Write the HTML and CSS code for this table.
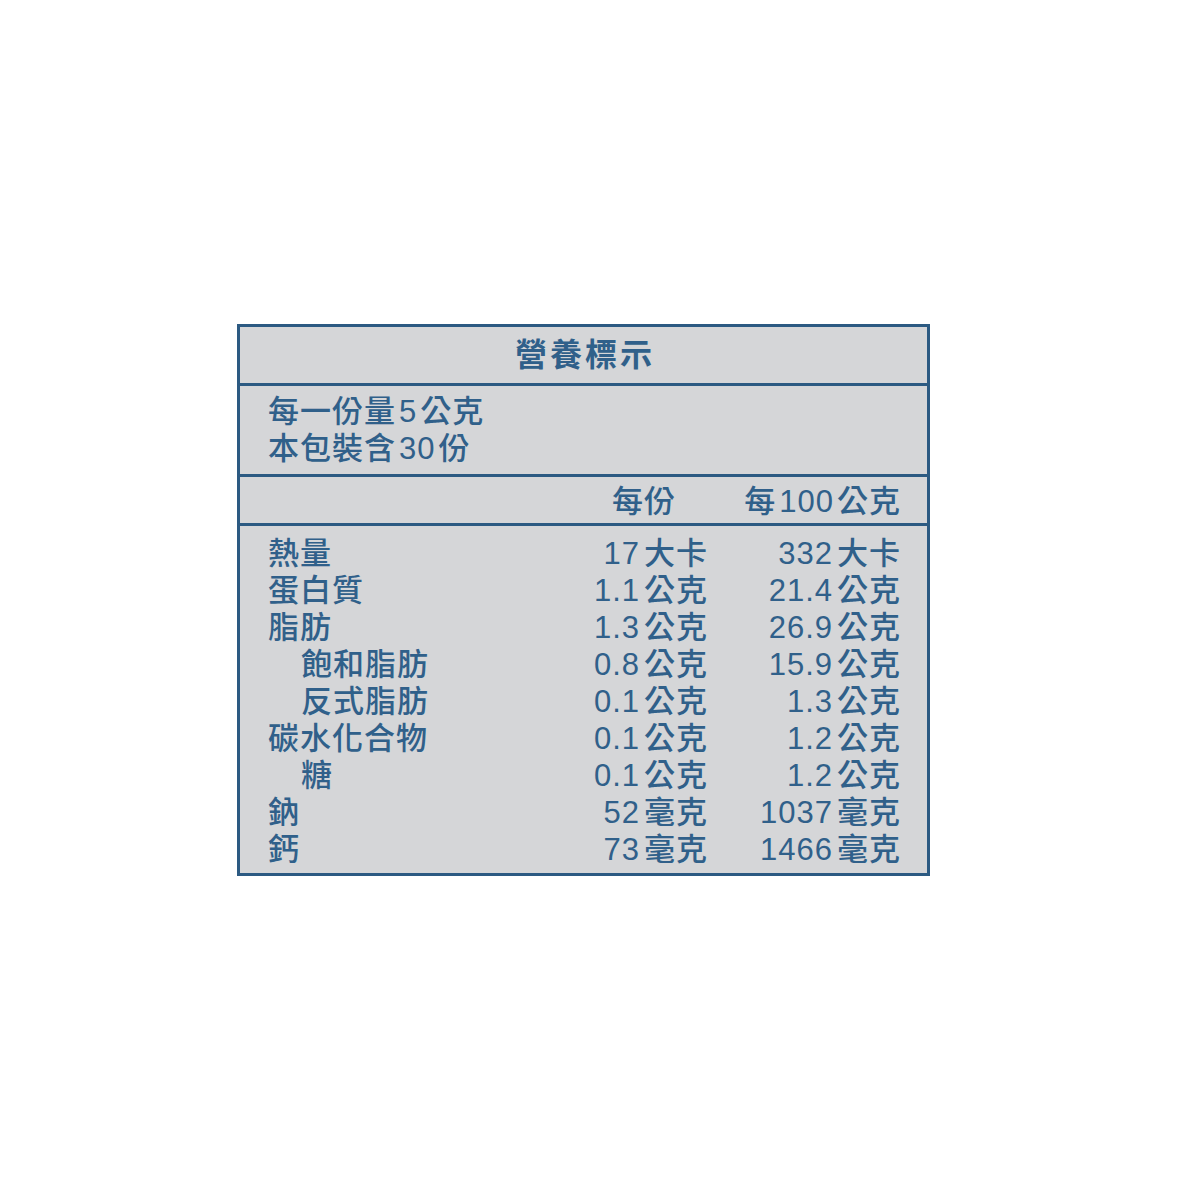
FILE: index.html
```html
<!DOCTYPE html>
<html lang="zh-Hant">
<head>
<meta charset="utf-8">
<title>營養標示</title>
<link rel="stylesheet" href="styles.css">
</head>
<body>
<div class="page">
  <div class="label">
    <div class="title">營養標示</div>
    <div class="serving">
      <div>每一份量<span class="num">5</span>公克</div>
      <div>本包裝含<span class="num">30</span>份</div>
    </div>
    <div class="colhead">
      <div></div>
      <div class="c1h">每份</div>
      <div class="c2h">每<span class="num">100</span>公克</div>
    </div>
    <div class="rows">
      <div class="name">熱量</div><div class="v">17<span class="u">大卡</span></div><div class="v">332<span class="u">大卡</span></div>
      <div class="name">蛋白質</div><div class="v">1.1<span class="u">公克</span></div><div class="v">21.4<span class="u">公克</span></div>
      <div class="name">脂肪</div><div class="v">1.3<span class="u">公克</span></div><div class="v">26.9<span class="u">公克</span></div>
      <div class="name sub">飽和脂肪</div><div class="v">0.8<span class="u">公克</span></div><div class="v">15.9<span class="u">公克</span></div>
      <div class="name sub">反式脂肪</div><div class="v">0.1<span class="u">公克</span></div><div class="v">1.3<span class="u">公克</span></div>
      <div class="name">碳水化合物</div><div class="v">0.1<span class="u">公克</span></div><div class="v">1.2<span class="u">公克</span></div>
      <div class="name sub">糖</div><div class="v">0.1<span class="u">公克</span></div><div class="v">1.2<span class="u">公克</span></div>
      <div class="name">鈉</div><div class="v">52<span class="u">毫克</span></div><div class="v">1037<span class="u">毫克</span></div>
      <div class="name">鈣</div><div class="v">73<span class="u">毫克</span></div><div class="v">1466<span class="u">毫克</span></div>
    </div>
  </div>
</div>
</body>
</html>
```

FILE: styles.css
```css
html, body {
  margin: 0;
  padding: 0;
  background: #ffffff;
}
.page {
  padding: 324px 0 0 237px;
}
.label {
  width: 687px;
  border: 3px solid #2c5a82;
  background: #d5d6d8;
  color: #30608a;
  font-family: "Liberation Sans", "Noto Sans CJK TC", sans-serif;
  font-weight: 500;
  font-size: 31px;
  line-height: 37px;
  letter-spacing: 1px;
}
.title {
  height: 56px;
  display: flex;
  align-items: center;
  justify-content: center;
  padding-left: 3px;
  font-weight: 700;
  font-size: 32px;
  letter-spacing: 3px;
  border-bottom: 3px solid #2c5a82;
}
.serving {
  padding: 7px 28px 7px 28px;
  height: 74px;
  border-bottom: 3px solid #2c5a82;
}
.num {
  margin: 0 3px;
}
.colhead {
  display: grid;
  grid-template-columns: 1fr 170px 193px;
  padding: 3px 26px 0 28px;
  height: 43px;
  align-items: center;
  border-bottom: 3px solid #2c5a82;
}
.c1h {
  text-align: right;
  padding-right: 32px;
}
.c2h {
  text-align: right;
}
.rows {
  display: grid;
  grid-template-columns: 1fr 170px 193px;
  padding: 9px 26px 5px 28px;
}
.name.sub {
  padding-left: 33px;
}
.v {
  text-align: right;
}
.u {
  margin-left: 4px;
}
```
